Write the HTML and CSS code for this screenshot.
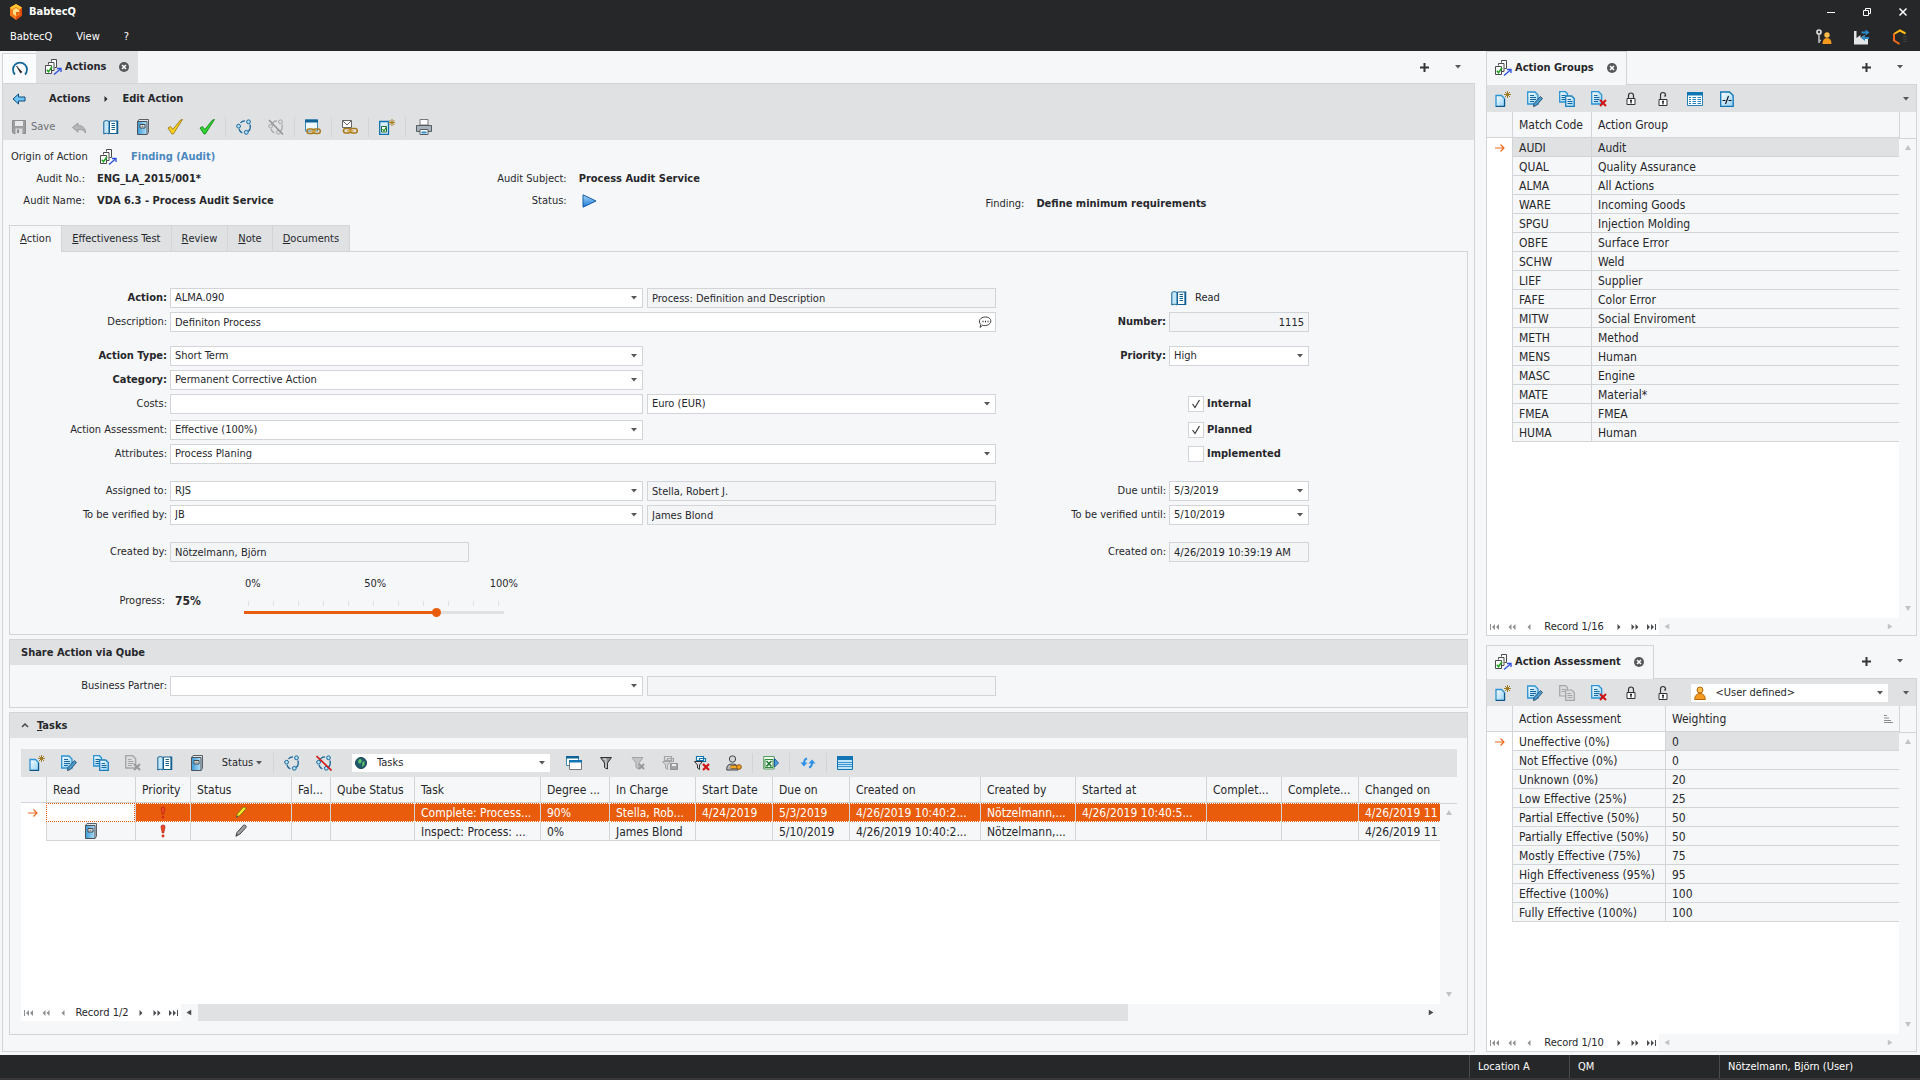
FILE: index.html
```
<!DOCTYPE html>
<html lang="en">
<head>
<meta charset="utf-8">
<title>BabtecQ</title>
<link rel="stylesheet" href="styles.css">
</head>
<body>
<svg class="sprite" aria-hidden="true">
  <defs>
    <linearGradient id="g-blue" x1="0" y1="0" x2="1" y2="1"><stop offset="0" stop-color="#fff"/><stop offset="1" stop-color="#8fd0f5"/></linearGradient>
    <linearGradient id="g-play" x1="0" y1="0" x2="0" y2="1"><stop offset="0" stop-color="#a8d6f8"/><stop offset="1" stop-color="#1878d8"/></linearGradient>
    <linearGradient id="g-book" x1="0" y1="0" x2="1" y2="0"><stop offset="0" stop-color="#3a9bd8"/><stop offset="1" stop-color="#b5e0f8"/></linearGradient>
  </defs>
  <symbol id="i-logo" viewBox="0 0 16 16"><path d="M8 0l6 3.500v8L8 16l-6-4.500v-8z" fill="#f47a1c"/><path d="M8 0l6 3.500-2 2L8 3 4 5.500l-2-2z" fill="#ffc52e"/><path d="M14 3.500v8L8 16v-3l4-2.500v-5z" fill="#e0480e"/><path d="M8 4l3 2v4l-3 2-3-2V6z" fill="#ffe08a"/><path d="M8 8h3v2l-3 2z" fill="#e8620f"/></symbol>
  <symbol id="i-gauge" viewBox="0 0 16 16"><path d="M3 13.500A7 7 0 1 1 13 13.500" fill="none" stroke="#15679b" stroke-width="1.800"/><path d="M4.500 5l5.500 6-1.500 1z" fill="#222" stroke="#222" stroke-width=".6"/></symbol>
  <symbol id="i-actions" viewBox="0 0 17 16"><g fill="#fff" stroke="#4a4a4a"><path d="M6.500 2.500V.5h5v8h-2"/><path d="M3.500 5.500v-2h5.500v8H7"/><path d="M.5 6.500h6v8h-6z"/></g><path d="M1.800 10.800l1.700 2 3.500-5" fill="none" stroke="#1fa51f" stroke-width="1.500"/><path d="M9 15.500l6.500-5.500" stroke="#2d4fe0" stroke-width="1.300"/><path d="M12 9.500h4V13" fill="none" stroke="#2d4fe0" stroke-width="1.300"/></symbol>
  <symbol id="i-close" viewBox="0 0 12 12"><circle cx="6" cy="6" r="5" fill="#55585b"/><path d="M4 4l4 4M8 4l-4 4" stroke="#fff" stroke-width="1.500"/></symbol>
  <symbol id="i-back" viewBox="0 0 14 12"><path d="M1 6l5.500-5v3H13v4H6.500v3z" fill="#6fc4f8" stroke="#0e4c7c"/></symbol>
  <symbol id="i-save" viewBox="0 0 16 16"><path d="M1.500 1.500h13v13h-12l-1-1z" fill="#9c9ea0" stroke="#8a8c8e"/><path d="M4 2h8v5H4z" fill="#e8e9ea"/><path d="M4.500 9.500h7V15h-7z" fill="#dcddde"/><path d="M6 10.500h2V14H6z" fill="#8a8c8e"/></symbol>
  <symbol id="i-undo" viewBox="0 0 16 16"><path d="M1.500 8.500L7 4v2.500c4.500 0 7.500 2.500 7.500 7.500C13 11 11 10.300 7 10.500v2.700z" fill="#b5b7b9" stroke="#999b9d"/></symbol>
  <symbol id="i-book" viewBox="0 0 16 16"><path d="M.8 2.500C2.500 1.200 4.500 1.500 6 2.500V15C4.500 14 2.500 14 .8 15z" fill="#c4e7fa" stroke="#0f5f92"/><path d="M6.500 2h7.500v12.500H6.500z" fill="#fff" stroke="#0f5f92"/><path d="M8.500 4.500h3.500M8.500 6.500h3.500M8.500 8.500h3.500M8.500 10.500h3.500" stroke="#155f90"/><path d="M14.500 1.500v13.500" stroke="#0f5f92" stroke-width="1.500"/></symbol>
  <symbol id="i-note" viewBox="0 0 16 16"><path d="M2.500 2.500l1.500-2h9.500v13l-1.500 2" fill="#dfe6eb" stroke="#5b6168"/><path d="M2.500 2.500h9.500v13H2.500z" fill="url(#g-book)" stroke="#4c5258"/><path d="M5 5.500h5v3.500H5z" fill="#e9f4fb" stroke="#444"/><path d="M6.500 7.300h2" stroke="#444" stroke-width=".8"/></symbol>
  <symbol id="i-check-y" viewBox="0 0 16 16"><path d="M1 9l2.500-1.500 2.300 3L13.500 1 15.500.5 6.300 15H5z" fill="#ffd21f" stroke="#8f6a05" stroke-width=".8"/></symbol>
  <symbol id="i-check-g" viewBox="0 0 16 16"><path d="M1 9l2.500-1.500 2.300 3L13.500 1 15.500.5 6.300 15H5z" fill="#30d530" stroke="#0c7c12" stroke-width=".8"/></symbol>
  <symbol id="i-cycle" viewBox="0 0 16 16"><g fill="none" stroke="#17659a" stroke-width="1.300"><path d="M4.500 4C5.500 2.500 7 1.800 9 1.800M13.800 5.500c1 2.500.5 5-1.500 7M3 10c.5 1.800 1.500 3 3.300 3.800"/></g><g fill="#b5e3fb" stroke="#17659a"><circle cx="2.600" cy="7.200" r="1.900"/><circle cx="12.500" cy="2.800" r="1.900"/><circle cx="10.300" cy="13.300" r="1.900"/></g></symbol>
  <symbol id="i-cycle-dis" viewBox="0 0 16 16"><g fill="none" stroke="#a5a7a9" stroke-width="1.300"><path d="M4.500 4C5.500 2.500 7 1.800 9 1.800M13.800 5.500c1 2.500.5 5-1.500 7M3 10c.5 1.800 1.500 3 3.300 3.800"/></g><g fill="#dcddde" stroke="#a5a7a9"><circle cx="2.600" cy="7.200" r="1.900"/><circle cx="12.500" cy="2.800" r="1.900"/><circle cx="10.300" cy="13.300" r="1.900"/></g><path d="M1 1l14 14.500" stroke="#8e9092" stroke-width="1.400"/></symbol>
  <symbol id="i-cycle-red" viewBox="0 0 16 16"><g fill="none" stroke="#17659a" stroke-width="1.300"><path d="M4.500 4C5.500 2.500 7 1.800 9 1.800M13.800 5.500c1 2.500.5 5-1.500 7M3 10c.5 1.800 1.500 3 3.300 3.800"/></g><g fill="#b5e3fb" stroke="#17659a"><circle cx="2.600" cy="7.200" r="1.900"/><circle cx="12.500" cy="2.800" r="1.900"/><circle cx="10.300" cy="13.300" r="1.900"/></g><path d="M.5 1l15 14.500" stroke="#d01818" stroke-width="1.600"/></symbol>
  <symbol id="i-winlink" viewBox="0 0 16 16"><path d="M.5 1h12v11H.5z" fill="#eef8fe" stroke="#3a88b8"/><path d="M0 .5h13v3H0z" fill="#0f6196"/><g fill="none" stroke="#a8791a" stroke-width="1.500"><rect x="2" y="10" width="7" height="4.500" rx="2.200"/><rect x="8.300" y="10" width="7" height="4.500" rx="2.200"/></g><path d="M5.500 12.300h6" stroke="#d8aa40" stroke-width="1.500"/></symbol>
  <symbol id="i-maillink" viewBox="0 0 16 16"><path d="M.5 1.500h9v7h-9z" fill="#fff" stroke="#666"/><path d="M.5 1.500L5 6l4.500-4.500" fill="none" stroke="#666"/><g fill="none" stroke="#a8791a" stroke-width="1.500"><rect x="1.500" y="9.500" width="7" height="4.500" rx="2.200"/><rect x="8.300" y="9.500" width="7" height="4.500" rx="2.200"/></g><path d="M5 11.800h6.500" stroke="#d8aa40" stroke-width="1.500"/></symbol>
  <symbol id="i-doccheck" viewBox="0 0 16 16"><path d="M.7 2.500h8.800V15.300H.7z" fill="#d6effc" stroke="#0f6fae" stroke-width="1.300"/><path d="M2.500 7.500h5V13h-5z" fill="#fff" stroke="#2a6a3a"/><path d="M3.500 10l1.500 2 2.500-4" fill="none" stroke="#0f8f20" stroke-width="1.200"/><path d="M13 0v7M9.500 3.500h7M10.500 1l5 5M15.500 1l-5 5" stroke="#a67c1a" stroke-width=".9"/></symbol>
  <symbol id="i-print" viewBox="0 0 16 16"><path d="M4 .5h8V6H4z" fill="#fff" stroke="#777"/><path d="M.5 6.500h15v6H.5z" fill="#a9b2ba" stroke="#555c63"/><path d="M4 10.500h8v5H4z" fill="#fff" stroke="#555c63"/><path d="M5.500 13.500h5" stroke="#2e8cc8" stroke-width="2"/></symbol>
  <symbol id="i-new" viewBox="0 0 16 16"><path d="M1 4.500h5.500l3 3V15.300H1z" fill="url(#g-blue)" stroke="#2a93d3" stroke-width="1.300"/><path d="M9.600 8v7.400H1" fill="none" stroke="#0d4f7c"/><path d="M12.500 0v7M9 3.500h7M10 1l5 5M15 1l-5 5" stroke="#9a7114" stroke-width=".9"/></symbol>
  <symbol id="i-edit" viewBox="0 0 16 16"><path d="M.7 1h7.300l3 3V13H.7z" fill="url(#g-blue)" stroke="#2a93d3" stroke-width="1.300"/><path d="M3 4.500h4M3 6.500h6M3 8.500h6M3 10.500h4" stroke="#16679d"/><path d="M6.500 15.500l.5-3L13.500 5.500l2 2L9.300 14.500z" fill="#4a9cd0" stroke="#274c66" stroke-width=".9"/></symbol>
  <symbol id="i-copy" viewBox="0 0 16 16"><path d="M.7.7h5.800l2 2V11H.7z" fill="url(#g-blue)" stroke="#2a93d3" stroke-width="1.300"/><path d="M2.500 4.500h4M2.500 6.500h4M2.500 8.500h4" stroke="#16679d"/><path d="M6.700 5h6l2.600 2.500V15.300H6.700z" fill="url(#g-blue)" stroke="#1d7fbc" stroke-width="1.300"/><path d="M8.500 8.500h3.500M8.500 10.500h5M8.500 12.500h5" stroke="#16679d"/></symbol>
  <symbol id="i-copy-dis" viewBox="0 0 16 16"><g fill="#dcddde" stroke="#a3a5a7" stroke-width="1.200"><path d="M.7.7h5.800l2 2V11H.7z"/><path d="M6.700 5h6l2.600 2.500V15.300H6.700z"/></g><path d="M2.500 4.500h4M2.500 6.500h4M8.500 8.500h3.500M8.500 10.500h5M8.500 12.500h5" stroke="#a3a5a7"/></symbol>
  <symbol id="i-del" viewBox="0 0 16 16"><path d="M.7.7h7l3 3V13H.7z" fill="url(#g-blue)" stroke="#2a93d3" stroke-width="1.300"/><path d="M3 4.500h3.500M3 6.500h5.500M3 8.500h5.500M3 10.500h4" stroke="#16679d"/><path d="M9 9l6 6M15 9l-6 6" stroke="#d11313" stroke-width="2"/></symbol>
  <symbol id="i-del-dis" viewBox="0 0 16 16"><path d="M.7.7h7l3 3V13H.7z" fill="#dcddde" stroke="#a3a5a7" stroke-width="1.300"/><path d="M3 4.500h3.500M3 6.500h5.500M3 8.500h5.500M3 10.500h4" stroke="#a3a5a7"/><path d="M9 9l6 6M15 9l-6 6" stroke="#97999b" stroke-width="2"/></symbol>
  <symbol id="i-lock" viewBox="0 0 16 16"><path d="M5.500 7V4.500a2.500 2.500 0 0 1 5 0V7" fill="none" stroke="#333" stroke-width="1.200"/><path d="M4 7.500h8v6H4z" fill="#fff" stroke="#333"/><path d="M8 9v3.500M7 9.500h2" stroke="#222" stroke-width="1.300"/></symbol>
  <symbol id="i-unlock" viewBox="0 0 16 16"><path d="M5.500 8.500V4a2.500 2.500 0 0 1 5 0v1H9" fill="none" stroke="#333" stroke-width="1.200"/><path d="M4 8.500h8v6H4z" fill="#fff" stroke="#333"/><path d="M8 10v3.500M7 10.500h2" stroke="#222" stroke-width="1.300"/></symbol>
  <symbol id="i-table" viewBox="0 0 16 16"><path d="M.5 1.500h15v13H.5z" fill="#fff" stroke="#2580b8"/><path d="M0 1h16v3.500H0z" fill="#1376b4"/><path d="M2 6.500h2M5.500 6.500H9M10.500 6.500H14M2 8.500h2M5.500 8.500H9M10.500 8.500H14M2 10.500h2M5.500 10.500H9M10.500 10.500H14M2 12.500h2M5.500 12.500H9M10.500 12.500H14" stroke="#2580b8"/></symbol>
  <symbol id="i-script" viewBox="0 0 16 16"><path d="M1.700 1h9l3.500 3.500V15.300H1.700z" fill="url(#g-blue)" stroke="#1376b4" stroke-width="1.300"/><path d="M3.500 9.500h3M9.500 9.500h3M6.500 13l3-8" stroke="#111" stroke-width="1.100"/></symbol>
  <symbol id="i-windows" viewBox="0 0 16 16"><path d="M.5 1.500h12v9H.5z" fill="#fff" stroke="#3a88b8"/><path d="M0 1h13v2.500H0z" fill="#0f6196"/><path d="M3.500 5.500h12v9h-12z" fill="#fff" stroke="#777"/><path d="M3 5h13v2.500H3z" fill="#1376b4"/></symbol>
  <symbol id="i-funnel" viewBox="0 0 16 16"><path d="M2.500 2.500h11L9.500 8v6l-3-1.500V8z" fill="#8c9094" stroke="#333"/><path d="M5 4h3v9" fill="none" stroke="#e6e8ea"/></symbol>
  <symbol id="i-funnel-dis" viewBox="0 0 16 16"><path d="M2 2.500h11L9 8v6l-3-1.500V8z" fill="#c3c5c7" stroke="#a3a5a7"/><path d="M9 9l5 5M14 9l-5 5" stroke="#97999b" stroke-width="2"/></symbol>
  <symbol id="i-funnel-save" viewBox="0 0 16 16"><path d="M2.500 1.500h7v4h-7zM5.500 3.500h6v3h-6z" fill="#dcddde" stroke="#a3a5a7" stroke-width="1.200"/><path d="M.5 6.500h8L5.500 10v4.500L3.500 13v-3z" fill="#cfd1d3" stroke="#a3a5a7"/><path d="M8.500 8.500h7v6h-7z" fill="#a3a5a7" stroke="#8e9092"/><path d="M10 9h4v2h-4z" fill="#eee"/></symbol>
  <symbol id="i-funnel-del" viewBox="0 0 16 16"><path d="M2.500 1.500h7v4h-7zM5.500 3.500h6v3h-6z" fill="#fff" stroke="#1376b4" stroke-width="1.200"/><path d="M.5 6.500h8L5.500 10v4.500L3.500 13v-3z" fill="#ddd" stroke="#333"/><path d="M9 9l6 6M15 9l-6 6" stroke="#d11313" stroke-width="2.200"/></symbol>
  <symbol id="i-userkey" viewBox="0 0 16 16"><circle cx="6.500" cy="4" r="3.200" fill="#d3d5d7" stroke="#444"/><path d="M.7 15c0-5 2-6 5.800-6s5.500 1.500 5.500 6z" fill="#b4b8bb" stroke="#444"/><path d="M4.500 12h7" stroke="#8d4f08" stroke-width="3.500"/><path d="M4.500 12h7" stroke="#f5a623" stroke-width="2"/><circle cx="13" cy="12" r="2.300" fill="#f5a623" stroke="#8d4f08"/></symbol>
  <symbol id="i-excel" viewBox="0 0 16 16"><path d="M.7 1.500h10.500V14H.7z" fill="#eef8ee" stroke="#5a9c62"/><path d="M2 4.500h8v8H2z" fill="#fff" stroke="#2f8a3c"/><path d="M3.500 6l5 5.500M8.500 6l-5 5.500" stroke="#1d7a2c" stroke-width="1.600"/><path d="M11.500 3.500L15.500 8l-4 4z" fill="#4aa0e0" stroke="#1d5fa0"/></symbol>
  <symbol id="i-refresh" viewBox="0 0 16 16"><g fill="none" stroke="#2f8fe6" stroke-width="2"><path d="M7 3.500C5 4 4 5.500 4 8.500M9 12.500c2-.5 3-2 3-5"/></g><path d="M.5 7.500h7L4 11.500zM8.500 8.500h7L12 4.500z" fill="#2f8fe6"/></symbol>
  <symbol id="i-list" viewBox="0 0 16 16"><path d="M.5 1.500h15v13H.5z" fill="#bfe3fa" stroke="#1376b4"/><path d="M0 1h16v4H0z" fill="#1376b4"/><path d="M1 7.500h14M1 9.500h14M1 11.500h14" stroke="#3a93cf"/></symbol>
  <symbol id="i-globe" viewBox="0 0 14 14"><circle cx="7" cy="7" r="5.500" fill="#1f5a6a" stroke="#17415a"/><path d="M4.500 3.500L7 3l1 2-2 3-2-2zM8.500 6l2-1v4l-2.500 2z" fill="#5fc06a"/></symbol>
  <symbol id="i-user" viewBox="0 0 14 14"><circle cx="7" cy="4" r="3" fill="#ffbd4a" stroke="#b3660a"/><path d="M1.700 13.500c0-3.500 2-6 5.300-6s5.300 2.500 5.300 6z" fill="#f59a1c" stroke="#b3660a"/></symbol>
  <symbol id="i-keyuser" viewBox="0 0 16 16"><circle cx="3" cy="3" r="2" fill="none" stroke="#ddd" stroke-width="1.700"/><path d="M3 5v9M3 11.500h2" stroke="#bbb" stroke-width="1.600"/><circle cx="11" cy="6" r="2.700" fill="#ffbd4a"/><path d="M6.500 15c0-4 1.500-6 4.500-6s4.500 2 4.500 6z" fill="#f59a1c"/></symbol>
  <symbol id="i-factory" viewBox="0 0 16 16"><path d="M0 2h2.500v7l4-3v3l4-3v3h3.500v6.500H0z" fill="#e3e5e7"/><path d="M7.500 2.500h4V.5l4 3-4 3v-2h-4zM15 8h-4V6L7 9l4 3v-2h4z" fill="#2b8ac6"/></symbol>
  <symbol id="i-hex" viewBox="0 0 16 16"><path d="M2 5l6-3.500L13.500 4.500" fill="none" stroke="#ffb914" stroke-width="2"/><path d="M2 4.500v7l5.500 3.500" fill="none" stroke="#f26a1b" stroke-width="2"/><path d="M11.500 7.500h3M11.500 10h3M11.500 12.500h3" stroke="#55585b" stroke-dasharray="1 1"/></symbol>
  <symbol id="i-play" viewBox="0 0 15 14"><path d="M1 .8L14 7 1 13.200z" fill="url(#g-play)" stroke="#145fa6"/></symbol>
  <symbol id="i-bang" viewBox="0 0 8 14"><path d="M2 3a2 2 0 0 1 4 0L4.700 9H3.300z" fill="#f0462a" stroke="#a8200c" stroke-width=".7"/><circle cx="4" cy="12" r="1.400" fill="#d83018"/></symbol>
  <symbol id="i-pen-y" viewBox="0 0 14 14"><path d="M2 11.500l1-3L9.500 1.200c1-.9 3.500.8 2.500 2.300L5.500 10.500z" fill="#f5e928" stroke="#6f6a10" stroke-width=".9"/><path d="M1.500 13l.8-2.800 1.700 1.500z" fill="#555"/></symbol>
  <symbol id="i-pen-g" viewBox="0 0 14 14"><path d="M2 11.500l1-3L9.500 1.200c1-.9 3.500.8 2.500 2.300L5.500 10.500z" fill="#9c9fa2" stroke="#44474a"/><path d="M1.500 13l.8-2.800 1.700 1.500z" fill="#444"/></symbol>
  <symbol id="i-arrow" viewBox="0 0 10 8"><path d="M0 4h9M5.500 .5L9 4 5.500 7.500" fill="none" stroke="#ec6b1f" stroke-width="1.200"/></symbol>
  <symbol id="i-bubble" viewBox="0 0 14 13"><path d="M2 12l.8-3C-.2 6 2 1.500 7.300 1.500s7.500 4.500 3.500 7.500C9 10.300 6 10.200 4.500 9.800z" fill="#fff" stroke="#444"/><path d="M4.500 6h1M7 6h1M9.500 6h1" stroke="#222" stroke-width="1.300"/></symbol>
  <symbol id="i-plus" viewBox="0 0 9 9"><path d="M4.500 0v9M0 4.500h9" stroke="#333639" stroke-width="2"/></symbol>
  <symbol id="i-down" viewBox="0 0 6 4"><path d="M0 0h6L3 3.500z" fill="currentColor"/></symbol>
  <symbol id="i-up" viewBox="0 0 6 5"><path d="M0 5h6L3 0z" fill="currentColor"/></symbol>
  <symbol id="i-first" viewBox="0 0 10 6"><path d="M.5 0v6" stroke="currentColor"/><path d="M5 0v6L2 3zM9 0v6L6 3z" fill="currentColor"/></symbol>
  <symbol id="i-pgprev" viewBox="0 0 8 6"><path d="M3.500 0v6L.5 3zM7.500 0v6l-3-3z" fill="currentColor"/></symbol>
  <symbol id="i-prev" viewBox="0 0 4 6"><path d="M3.500 0v6L.5 3z" fill="currentColor"/></symbol>
  <symbol id="i-next" viewBox="0 0 4 6"><path d="M.5 0v6l3-3z" fill="currentColor"/></symbol>
  <symbol id="i-pgnext" viewBox="0 0 8 6"><path d="M.5 0v6l3-3zM4.500 0v6l3-3z" fill="currentColor"/></symbol>
  <symbol id="i-last" viewBox="0 0 10 6"><path d="M9.500 0v6" stroke="currentColor"/><path d="M1 0v6l3-3zM5 0v6l3-3z" fill="currentColor"/></symbol>
  <symbol id="i-sort" viewBox="0 0 9 8"><path d="M0 .5h3M0 3h5M0 5.500h7M0 7.500h9" stroke="#8b8e91"/></symbol>
  <symbol id="i-min" viewBox="0 0 10 10"><path d="M1 5.500h8" stroke="#fff"/></symbol>
  <symbol id="i-restore" viewBox="0 0 10 10"><path d="M1.500 3.500h5v5h-5zM3.500 3V1.500h5v5H7" fill="none" stroke="#fff"/></symbol>
  <symbol id="i-x" viewBox="0 0 10 10"><path d="M1.500 1.500l7 7M8.500 1.500l-7 7" stroke="#fff" stroke-width="1.500"/></symbol>
</svg>

<div class="app">
  <header class="top">
    <div class="title-bar">
      <svg class="ic16"><use href="#i-logo"/></svg>
      <strong>BabtecQ</strong>
      <div class="window-buttons">
        <button aria-label="Minimize"><svg class="ic10"><use href="#i-min"/></svg></button>
        <button aria-label="Restore"><svg class="ic10"><use href="#i-restore"/></svg></button>
        <button aria-label="Close"><svg class="ic10"><use href="#i-x"/></svg></button>
      </div>
    </div>
    <nav class="menu-bar">
      <button>BabtecQ</button><button>View</button><button>?</button>
      <div class="menu-tools">
        <button aria-label="User rights"><svg class="ic16"><use href="#i-keyuser"/></svg></button>
        <button aria-label="Change location"><svg class="ic16"><use href="#i-factory"/></svg></button>
        <button aria-label="Qube"><svg class="ic16"><use href="#i-hex"/></svg></button>
      </div>
    </nav>
  </header>

  <div class="workspace">
    <main class="main-col">
      <div class="doc-tabs">
        <button class="doc-tab home" aria-label="Dashboard"><svg class="ic16"><use href="#i-gauge"/></svg></button>
        <div class="doc-tab shaded"><svg class="ic17"><use href="#i-actions"/></svg><strong>Actions</strong><button class="tab-close" aria-label="Close tab"><svg class="ic12"><use href="#i-close"/></svg></button></div>
        <div class="tab-tools"><button aria-label="Add"><svg class="ic9"><use href="#i-plus"/></svg></button><button aria-label="More"><svg class="ic-down"><use href="#i-down"/></svg></button></div>
      </div>
      <div class="main-body">
        <div class="crumbs">
          <button aria-label="Back"><svg class="ic-back"><use href="#i-back"/></svg></button>
          <strong>Actions</strong><svg class="n4"><use href="#i-next"/></svg><strong>Edit Action</strong>
        </div>
        <div class="toolbar main-tools">
          <button class="save" disabled><svg class="ic16"><use href="#i-save"/></svg>Save</button>
          <button class="tool" aria-label="Undo"><svg class="ic16"><use href="#i-undo"/></svg></button>
          <button class="tool" aria-label="Read"><svg class="ic16"><use href="#i-book"/></svg></button>
          <button class="tool" aria-label="Unread"><svg class="ic16"><use href="#i-note"/></svg></button>
          <button class="tool" aria-label="Complete"><svg class="ic16"><use href="#i-check-y"/></svg></button>
          <button class="tool" aria-label="Verify"><svg class="ic16"><use href="#i-check-g"/></svg></button>
          <span class="sep"></span>
          <button class="tool" aria-label="Workflow"><svg class="ic16"><use href="#i-cycle"/></svg></button>
          <button class="tool" aria-label="Stop workflow"><svg class="ic16"><use href="#i-cycle-dis"/></svg></button>
          <span class="sep"></span>
          <button class="tool" aria-label="Link"><svg class="ic16"><use href="#i-winlink"/></svg></button>
          <span class="sep"></span>
          <button class="tool" aria-label="Mail link"><svg class="ic16"><use href="#i-maillink"/></svg></button>
          <span class="sep"></span>
          <button class="tool" aria-label="New action"><svg class="ic16"><use href="#i-doccheck"/></svg></button>
          <span class="sep"></span>
          <button class="tool" aria-label="Print"><svg class="ic16"><use href="#i-print"/></svg></button>
        </div>

        <div class="summary">
          <span class="origin">Origin of Action</span>
          <span class="origin-value"><svg class="ic17"><use href="#i-actions"/></svg><a href="#finding">Finding (Audit)</a></span>
          <span class="key">Audit No.:</span><strong>ENG_LA_2015/001*</strong>
          <span class="key">Audit Subject:</span><strong>Process Audit Service</strong>
          <span class="key"></span><span></span>
          <span class="key">Audit Name:</span><strong>VDA 6.3 - Process Audit Service</strong>
          <span class="key">Status:</span><span class="status"><svg class="ic-play"><use href="#i-play"/></svg></span>
          <span class="key low">Finding:</span><strong class="low">Define minimum requirements</strong>
        </div>

        <div class="page-tabs" role="tablist">
          <button class="page-tab active" role="tab"><u>A</u>ction</button>
          <button class="page-tab" role="tab"><u>E</u>ffectiveness Test</button>
          <button class="page-tab" role="tab"><u>R</u>eview</button>
          <button class="page-tab" role="tab"><u>N</u>ote</button>
          <button class="page-tab" role="tab"><u>D</u>ocuments</button>
        </div>
        <form class="panel form">
          <div class="group">
            <div class="row">
              <label class="req" for="action">Action:</label>
              <select id="action"><option>ALMA.090</option></select>
              <input class="second" aria-label="Action name" readonly value="Process: Definition and Description">
              <span class="read"><svg class="ic16"><use href="#i-book"/></svg>Read</span>
            </div>
            <div class="row">
              <label for="desc">Description:</label>
              <div class="wide with-icon"><input id="desc" value="Definiton Process"><svg class="ic14"><use href="#i-bubble"/></svg></div>
              <label class="req" for="number">Number:</label>
              <input id="number" class="num" readonly value="1115">
            </div>
          </div>
          <div class="group">
            <div class="row">
              <label class="req" for="type">Action Type:</label>
              <select id="type"><option>Short Term</option></select>
              <label class="req" for="prio">Priority:</label>
              <select id="prio"><option>High</option></select>
            </div>
            <div class="row">
              <label class="req" for="cat">Category:</label>
              <select id="cat"><option>Permanent Corrective Action</option></select>
            </div>
            <div class="row">
              <label for="costs">Costs:</label>
              <input id="costs">
              <select class="second" aria-label="Currency"><option>Euro (EUR)</option></select>
              <span class="check"><input type="checkbox" id="internal" checked><label class="req" for="internal">Internal</label></span>
            </div>
          </div>
          <div class="group close">
            <div class="row">
              <label for="assess">Action Assessment:</label>
              <select id="assess"><option>Effective (100%)</option></select>
              <span class="check"><input type="checkbox" id="planned" checked><label class="req" for="planned">Planned</label></span>
            </div>
            <div class="row">
              <label for="attr">Attributes:</label>
              <select id="attr" class="wide"><option>Process Planing</option></select>
              <span class="check"><input type="checkbox" id="impl"><label class="req" for="impl">Implemented</label></span>
            </div>
          </div>
          <div class="group">
            <div class="row">
              <label for="assigned">Assigned to:</label>
              <select id="assigned"><option>RJS</option></select>
              <input class="second" aria-label="Assignee name" readonly value="Stella, Robert J.">
              <label for="due">Due until:</label>
              <select id="due"><option>5/3/2019</option></select>
            </div>
            <div class="row">
              <label for="verify">To be verified by:</label>
              <select id="verify"><option>JB</option></select>
              <input class="second" aria-label="Verifier name" readonly value="James Blond">
              <label for="until">To be verified until:</label>
              <select id="until"><option>5/10/2019</option></select>
            </div>
          </div>
          <div class="group">
            <div class="row">
              <label for="creator">Created by:</label>
              <input id="creator" class="short" readonly value="Nötzelmann, Björn">
              <label for="created">Created on:</label>
              <input id="created" readonly value="4/26/2019 10:39:19 AM">
            </div>
          </div>
          <div class="progress">
            <label for="progress">Progress:</label>
            <strong>75%</strong>
            <div class="scale">
              <div class="scale-labels"><span>0%</span><span>50%</span><span>100%</span></div>
              <div class="ticks"></div>
              <input type="range" id="progress" min="0" max="100" value="75">
            </div>
          </div>
        </form>

        <section class="panel">
          <h2>Share Action via Qube</h2>
          <div class="share row">
            <label for="partner">Business Partner:</label>
            <select id="partner"><option></option></select>
            <input class="second" aria-label="Business partner name" readonly>
          </div>
        </section>

        <section class="panel tasks">
          <h2><svg class="ic-up2"><path d="M1 5l3-3 3 3" fill="none" stroke="#444" stroke-width="1.500"/></svg><span><u>T</u>asks</span></h2>
          <div class="tasks-body">
            <div class="toolbar">
              <button class="tool" aria-label="New"><svg class="ic16"><use href="#i-new"/></svg></button>
              <button class="tool" aria-label="Edit"><svg class="ic16"><use href="#i-edit"/></svg></button>
              <button class="tool" aria-label="Copy"><svg class="ic16"><use href="#i-copy"/></svg></button>
              <button class="tool" aria-label="Delete"><svg class="ic16"><use href="#i-del-dis"/></svg></button>
              <button class="tool" aria-label="Read"><svg class="ic16"><use href="#i-book"/></svg></button>
              <button class="tool" aria-label="Unread"><svg class="ic16"><use href="#i-note"/></svg></button>
              <button class="status-menu">Status<svg class="ic-down"><use href="#i-down"/></svg></button>
              <span class="sep"></span>
              <button class="tool" aria-label="Workflow"><svg class="ic16"><use href="#i-cycle"/></svg></button>
              <button class="tool" aria-label="Stop workflow"><svg class="ic16"><use href="#i-cycle-red"/></svg></button>
              <span class="combo"><svg class="ic14"><use href="#i-globe"/></svg><select aria-label="View"><option>Tasks</option></select></span>
              <button class="tool" aria-label="Views"><svg class="ic16"><use href="#i-windows"/></svg></button>
              <button class="tool" aria-label="Filter"><svg class="ic16"><use href="#i-funnel"/></svg></button>
              <button class="tool" aria-label="Clear filter"><svg class="ic16"><use href="#i-funnel-dis"/></svg></button>
              <button class="tool" aria-label="Save filter"><svg class="ic16"><use href="#i-funnel-save"/></svg></button>
              <button class="tool" aria-label="Delete filter"><svg class="ic16"><use href="#i-funnel-del"/></svg></button>
              <button class="tool" aria-label="User settings"><svg class="ic16"><use href="#i-userkey"/></svg></button>
              <span class="sep"></span>
              <button class="tool" aria-label="Export"><svg class="ic16"><use href="#i-excel"/></svg></button>
              <span class="sep"></span>
              <button class="tool" aria-label="Refresh"><svg class="ic16"><use href="#i-refresh"/></svg></button>
              <span class="sep"></span>
              <button class="tool" aria-label="Details"><svg class="ic16"><use href="#i-list"/></svg></button>
            </div>
            <div class="grid-area">
              <div class="grid-scroll">
                <table class="grid task-grid">
                  <colgroup><col class="w25"><col class="w89"><col class="w55"><col class="w101"><col class="w39"><col class="w84"><col class="w126"><col class="w69"><col class="w86"><col class="w77"><col class="w77"><col class="w131"><col class="w95"><col class="w131"><col class="w75"><col class="w77"><col></colgroup>
                  <thead><tr><th></th><th>Read</th><th>Priority</th><th>Status</th><th>Fal...</th><th>Qube Status</th><th>Task</th><th>Degree ...</th><th>In Charge</th><th>Start Date</th><th>Due on</th><th>Created on</th><th>Created by</th><th>Started at</th><th>Complet...</th><th>Complete...</th><th>Changed on</th></tr></thead>
                  <tbody>
                    <tr class="selected"><td class="ind"><svg class="ic-arrow"><use href="#i-arrow"/></svg></td><td class="focus"></td><td class="mid"><svg class="ic-bang"><use href="#i-bang"/></svg></td><td class="mid"><svg class="ic14"><use href="#i-pen-y"/></svg></td><td></td><td></td><td>Complete: Process...</td><td>90%</td><td>Stella, Rob...</td><td>4/24/2019</td><td>5/3/2019</td><td>4/26/2019 10:40:2...</td><td>Nötzelmann,...</td><td>4/26/2019 10:40:5...</td><td></td><td></td><td>4/26/2019 11</td></tr>
                    <tr><td class="ind"></td><td class="mid"><svg class="ic16"><use href="#i-note"/></svg></td><td class="mid"><svg class="ic-bang"><use href="#i-bang"/></svg></td><td class="mid"><svg class="ic14"><use href="#i-pen-g"/></svg></td><td></td><td></td><td>Inspect: Process: ...</td><td>0%</td><td>James Blond</td><td></td><td>5/10/2019</td><td>4/26/2019 10:40:2...</td><td>Nötzelmann,...</td><td></td><td></td><td></td><td>4/26/2019 11</td></tr>
                  </tbody>
                </table>
              </div>
              <div class="vscroll plain"><svg class="ic-tri"><use href="#i-up"/></svg><svg class="ic-tri flip"><use href="#i-up"/></svg></div>
            </div>
            <div class="record-bar">
              <div class="nav">
                <button class="off" aria-label="First"><svg class="n10"><use href="#i-first"/></svg></button><button class="off" aria-label="Previous page"><svg class="n8"><use href="#i-pgprev"/></svg></button><button class="off" aria-label="Previous"><svg class="n4"><use href="#i-prev"/></svg></button>
                <span class="pos">Record 1/2</span>
                <button aria-label="Next"><svg class="n4"><use href="#i-next"/></svg></button><button aria-label="Next page"><svg class="n8"><use href="#i-pgnext"/></svg></button><button aria-label="Last"><svg class="n10"><use href="#i-last"/></svg></button>
              </div>
              <div class="hscroll live"><svg class="ic-tri turn-left"><use href="#i-up"/></svg><div class="track"><div class="thumb"></div></div><svg class="ic-tri turn-right"><use href="#i-up"/></svg></div>
            </div>
          </div>
        </section>
      </div>
    </main>

    <aside class="side-col">
      <section class="dock groups">
        <div class="doc-tabs">
          <div class="doc-tab active"><svg class="ic17"><use href="#i-actions"/></svg><strong>Action Groups</strong><button class="tab-close" aria-label="Close tab"><svg class="ic12"><use href="#i-close"/></svg></button></div>
          <div class="tab-tools"><button aria-label="Add"><svg class="ic9"><use href="#i-plus"/></svg></button><button aria-label="More"><svg class="ic-down"><use href="#i-down"/></svg></button></div>
        </div>
        <div class="dock-body">
          <div class="toolbar">
            <button class="tool" aria-label="New"><svg class="ic16"><use href="#i-new"/></svg></button>
            <button class="tool" aria-label="Edit"><svg class="ic16"><use href="#i-edit"/></svg></button>
            <button class="tool" aria-label="Copy"><svg class="ic16"><use href="#i-copy"/></svg></button>
            <button class="tool" aria-label="Delete"><svg class="ic16"><use href="#i-del"/></svg></button>
            <button class="tool" aria-label="Lock"><svg class="ic16"><use href="#i-lock"/></svg></button>
            <button class="tool" aria-label="Unlock"><svg class="ic16"><use href="#i-unlock"/></svg></button>
            <button class="tool" aria-label="Table"><svg class="ic16"><use href="#i-table"/></svg></button>
            <button class="tool" aria-label="Script"><svg class="ic16"><use href="#i-script"/></svg></button>
            <button class="more" aria-label="More tools"><svg class="ic-down"><use href="#i-down"/></svg></button>
          </div>
          <div class="grid-area">
            <div class="grid-scroll">
              <table class="grid">
                <colgroup><col class="w25"><col class="w79"><col></colgroup>
                <thead><tr><th></th><th>Match Code</th><th>Action Group</th></tr></thead>
                <tbody>
                  <tr class="current"><td class="ind"><svg class="ic-arrow"><use href="#i-arrow"/></svg></td><td>AUDI</td><td>Audit</td></tr>
                  <tr><td class="ind"></td><td>QUAL</td><td>Quality Assurance</td></tr>
                  <tr><td class="ind"></td><td>ALMA</td><td>All Actions</td></tr>
                  <tr><td class="ind"></td><td>WARE</td><td>Incoming Goods</td></tr>
                  <tr><td class="ind"></td><td>SPGU</td><td>Injection Molding</td></tr>
                  <tr><td class="ind"></td><td>OBFE</td><td>Surface Error</td></tr>
                  <tr><td class="ind"></td><td>SCHW</td><td>Weld</td></tr>
                  <tr><td class="ind"></td><td>LIEF</td><td>Supplier</td></tr>
                  <tr><td class="ind"></td><td>FAFE</td><td>Color Error</td></tr>
                  <tr><td class="ind"></td><td>MITW</td><td>Social Enviroment</td></tr>
                  <tr><td class="ind"></td><td>METH</td><td>Method</td></tr>
                  <tr><td class="ind"></td><td>MENS</td><td>Human</td></tr>
                  <tr><td class="ind"></td><td>MASC</td><td>Engine</td></tr>
                  <tr><td class="ind"></td><td>MATE</td><td>Material*</td></tr>
                  <tr><td class="ind"></td><td>FMEA</td><td>FMEA</td></tr>
                  <tr><td class="ind"></td><td>HUMA</td><td>Human</td></tr>
                </tbody>
              </table>
            </div>
            <div class="vscroll"><svg class="ic-tri"><use href="#i-up"/></svg><svg class="ic-tri flip"><use href="#i-up"/></svg></div>
          </div>
          <div class="record-bar">
            <div class="nav roomy">
              <button class="off" aria-label="First"><svg class="n10"><use href="#i-first"/></svg></button><button class="off" aria-label="Previous page"><svg class="n8"><use href="#i-pgprev"/></svg></button><button class="off" aria-label="Previous"><svg class="n4"><use href="#i-prev"/></svg></button>
              <span class="pos">Record 1/16</span>
              <button aria-label="Next"><svg class="n4"><use href="#i-next"/></svg></button><button aria-label="Next page"><svg class="n8"><use href="#i-pgnext"/></svg></button><button aria-label="Last"><svg class="n10"><use href="#i-last"/></svg></button>
            </div>
            <div class="hscroll"><svg class="ic-tri turn-left"><use href="#i-up"/></svg><svg class="ic-tri turn-right"><use href="#i-up"/></svg></div>
          </div>
        </div>
      </section>

      <section class="dock assessment">
        <div class="doc-tabs">
          <div class="doc-tab active"><svg class="ic17"><use href="#i-actions"/></svg><strong>Action Assessment</strong><button class="tab-close" aria-label="Close tab"><svg class="ic12"><use href="#i-close"/></svg></button></div>
          <div class="tab-tools"><button aria-label="Add"><svg class="ic9"><use href="#i-plus"/></svg></button><button aria-label="More"><svg class="ic-down"><use href="#i-down"/></svg></button></div>
        </div>
        <div class="dock-body">
          <div class="toolbar">
            <button class="tool" aria-label="New"><svg class="ic16"><use href="#i-new"/></svg></button>
            <button class="tool" aria-label="Edit"><svg class="ic16"><use href="#i-edit"/></svg></button>
            <button class="tool" aria-label="Copy"><svg class="ic16"><use href="#i-copy-dis"/></svg></button>
            <button class="tool" aria-label="Delete"><svg class="ic16"><use href="#i-del"/></svg></button>
            <button class="tool" aria-label="Lock"><svg class="ic16"><use href="#i-lock"/></svg></button>
            <button class="tool" aria-label="Unlock"><svg class="ic16"><use href="#i-unlock"/></svg></button>
            <span class="combo"><svg class="ic14"><use href="#i-user"/></svg><select aria-label="View"><option>&lt;User defined&gt;</option></select></span>
            <button class="more" aria-label="More tools"><svg class="ic-down"><use href="#i-down"/></svg></button>
          </div>
          <div class="grid-area">
            <div class="grid-scroll">
              <table class="grid">
                <colgroup><col class="w25"><col class="w153"><col></colgroup>
                <thead><tr><th></th><th>Action Assessment</th><th><span class="sorted">Weighting<svg class="ic-sort"><use href="#i-sort"/></svg></span></th></tr></thead>
                <tbody>
                  <tr class="current"><td class="ind"><svg class="ic-arrow"><use href="#i-arrow"/></svg></td><td class="focus">Uneffective (0%)</td><td>0</td></tr>
                  <tr><td class="ind"></td><td>Not Effective (0%)</td><td>0</td></tr>
                  <tr><td class="ind"></td><td>Unknown (0%)</td><td>20</td></tr>
                  <tr><td class="ind"></td><td>Low Effective (25%)</td><td>25</td></tr>
                  <tr><td class="ind"></td><td>Partial Effective (50%)</td><td>50</td></tr>
                  <tr><td class="ind"></td><td>Partially Effective (50%)</td><td>50</td></tr>
                  <tr><td class="ind"></td><td>Mostly Effective (75%)</td><td>75</td></tr>
                  <tr><td class="ind"></td><td>High Effectiveness (95%)</td><td>95</td></tr>
                  <tr><td class="ind"></td><td>Effective (100%)</td><td>100</td></tr>
                  <tr><td class="ind"></td><td>Fully Effective (100%)</td><td>100</td></tr>
                </tbody>
              </table>
            </div>
            <div class="vscroll"><svg class="ic-tri"><use href="#i-up"/></svg><svg class="ic-tri flip"><use href="#i-up"/></svg></div>
          </div>
          <div class="record-bar">
            <div class="nav roomy">
              <button class="off" aria-label="First"><svg class="n10"><use href="#i-first"/></svg></button><button class="off" aria-label="Previous page"><svg class="n8"><use href="#i-pgprev"/></svg></button><button class="off" aria-label="Previous"><svg class="n4"><use href="#i-prev"/></svg></button>
              <span class="pos">Record 1/10</span>
              <button aria-label="Next"><svg class="n4"><use href="#i-next"/></svg></button><button aria-label="Next page"><svg class="n8"><use href="#i-pgnext"/></svg></button><button aria-label="Last"><svg class="n10"><use href="#i-last"/></svg></button>
            </div>
            <div class="hscroll"><svg class="ic-tri turn-left"><use href="#i-up"/></svg><svg class="ic-tri turn-right"><use href="#i-up"/></svg></div>
          </div>
        </div>
      </section>
    </aside>
  </div>

  <footer class="status-bar"><span class="loc">Location A</span><span class="dept">QM</span><span class="who">Nötzelmann, Björn (User)</span></footer>
</div>
</body>
</html>
```
FILE: styles.css
```
:root {
  --bg: #f6f7f9;
  --bar: #dfe1e3;
  --line: #d2d4d7;
  --dark: #262729;
  --text: #26272b;
  --orange: #e85c0c;
  --caret: url("data:image/svg+xml,%3Csvg xmlns='http://www.w3.org/2000/svg' width='6' height='4'%3E%3Cpath d='M0 0h6L3 3.500z' fill='%2355585b'/%3E%3C/svg%3E");
  --tick: url("data:image/svg+xml,%3Csvg xmlns='http://www.w3.org/2000/svg' width='10' height='10'%3E%3Cpath d='M1.500 5l2.500 3.500L8.500 1' fill='none' stroke='%2333363a' stroke-width='1.200'/%3E%3C/svg%3E");
}

* { box-sizing: border-box; }

body {
  margin: 0;
  background: var(--bg);
  color: var(--text);
  font: 11px/16px "DejaVu Sans Condensed", "DejaVu Sans", "Noto Sans", sans-serif;
}

button, input, select { font: inherit; color: inherit; }
button { padding: 0; border: 0; background: none; display: inline-flex; align-items: center; justify-content: center; }
svg { display: block; flex: none; }

.sprite { position: absolute; width: 0; height: 0; }
.ic9 { width: 9px; height: 9px; }
.ic10 { width: 10px; height: 10px; }
.ic12 { width: 12px; height: 12px; }
.ic14 { width: 14px; height: 14px; }
.ic16 { width: 16px; height: 16px; }
.ic17 { width: 17px; height: 16px; }
.ic-back { width: 14px; height: 12px; }
.ic-play { width: 15px; height: 14px; }
.ic-bang { width: 8px; height: 14px; }
.ic-arrow { width: 10px; height: 8px; }
.ic-sort { width: 9px; height: 8px; }
.ic-down { width: 6px; height: 4px; color: #55585b; }
.ic-up2 { width: 8px; height: 7px; }
.ic-tri { width: 6px; height: 5px; color: #c0c2c5; }
.n4 { width: 4px; height: 6px; }
.n8 { width: 8px; height: 6px; }
.n10 { width: 10px; height: 6px; }
.flip { transform: rotate(180deg); }
.turn-left { transform: rotate(-90deg); }
.turn-right { transform: rotate(90deg); }

.app { min-height: 100vh; display: flex; flex-direction: column; }

/* title and menu */
.top { background: var(--dark); color: #fff; }
.title-bar { height: 23px; padding: 0 8px; display: flex; align-items: center; gap: 5px; }
.window-buttons { margin-left: auto; display: flex; }
.window-buttons button { width: 36px; height: 20px; }
.window-buttons button:last-child { margin-right: -9px; }
.menu-bar { height: 28px; padding: 0 10px; display: flex; align-items: center; gap: 24px; }
.menu-tools { margin-left: auto; display: flex; }
.menu-tools button { width: 38px; }
.menu-tools button:last-child { margin-right: -9px; }

/* workspace */
.workspace { flex: 1; display: grid; grid-template-columns: minmax(0, 1fr) 431px; gap: 11px; padding: 0 3px 3px 2px; }
.main-col, .side-col, .dock { display: flex; flex-direction: column; min-width: 0; }
.doc-tabs { display: flex; align-items: flex-end; height: 32px; }
.doc-tab { height: 32px; padding: 0 8px; display: flex; align-items: center; gap: 3px; }
.doc-tab.home { width: 34px; height: 30px; border: 1px solid var(--line); border-width: 1px 0 0 1px; background: #fafbfc; }
.doc-tab.shaded { padding-left: 9px; background: var(--bar); }
.doc-tab.active { height: 34px; border: 1px solid var(--line); border-bottom: 0; background: var(--bg); z-index: 1; margin-bottom: -1px; padding-bottom: 2px; }
.tab-close { margin-left: 9px; }
.tab-tools { margin-left: auto; align-self: center; display: flex; }
.tab-tools button { width: 34px; }

.main-body { flex: 1; display: flex; flex-direction: column; border: 1px solid var(--line); }
.crumbs { height: 29px; padding: 0 9px; display: flex; align-items: center; gap: 14px; background: var(--bar); }
.crumbs button { margin-right: 9px; }

.toolbar { height: 28px; display: flex; align-items: center; background: var(--bar); }
.toolbar.main-tools { height: 27px; }
.tool { width: 32px; height: 22px; }
.save { width: 60px; gap: 4px; color: #6d7073; justify-content: flex-start; padding-left: 8px; }
.sep { width: 1px; height: 20px; margin: 0 2px; background: #d2d4d6; }
.more { margin-left: auto; width: 20px; }
.combo { margin: 0 8px 0 12px; width: 198px; height: 18px; display: flex; align-items: center; padding-left: 2px; background: #fff; }
.combo select { flex: 1; height: 18px; border: 0; padding-left: 9px; }
.status-menu { width: 58px; gap: 3px; }

.summary {
  padding: 6px 0 13px;
  display: grid;
  grid-template-columns: 82px 358fr 100px 334fr 100px 438fr;
  grid-auto-rows: 22px;
  column-gap: 12px;
  align-items: center;
}
.summary .key { text-align: right; }
.summary .low { padding-top: 5px; }
.origin { padding-left: 8px; white-space: nowrap; }
.origin-value { grid-column: 2 / -1; display: flex; gap: 14px; padding-left: 3px; }
.origin-value a { color: #4a88bf; font-weight: bold; text-decoration: none; }
.status { padding-left: 3px; }

/* page tabs */
.page-tabs { display: flex; margin: 0 6px; height: 26px; align-items: flex-end; }
.page-tab { height: 26px; padding: 0 10px; background: var(--bar); border: 1px solid var(--line); border-width: 1px 1px 0 0; white-space: nowrap; }
.page-tab.active { height: 27px; margin-bottom: -1px; background: var(--bg); border-left-width: 1px; z-index: 1; }

.panel { margin: 0 6px 4px; border: 1px solid var(--line); }
.panel h2 { margin: 0; height: 25px; padding: 0 11px; display: flex; align-items: center; gap: 8px; background: var(--bar); font-size: 11px; }

/* form */
.form { padding: 36px 0 17px; }
.row { display: grid; grid-template-columns: 160px 474fr 352fr 173px 140px 158fr; align-items: center; }
.group { display: flex; flex-direction: column; gap: 4px; margin-bottom: 14px; }
.group:has(+ .close) { margin-bottom: 6px; }
.group.close, .group.close + .group { margin-bottom: 17px; }
.row > label { grid-column: 1; text-align: right; padding-right: 3px; white-space: nowrap; }
.req { font-weight: bold; }
.row > label ~ label { grid-column: 4; }
.row > select, .row > input, .with-icon { grid-column: 2; margin-right: 1px; }
.row > .second { grid-column: 3; margin: 0 0 0 3px; }
.row > .wide { grid-column: 2 / 4; margin-right: 0; }
.row > .short { width: 63%; }
.row > label ~ label + select, .row > label ~ label + input { grid-column: 5; margin: 0; }
input, select { height: 20px; min-width: 0; padding: 0 4px; border: 1px solid var(--line); border-radius: 0; background-color: #fff; outline: 0; }
input[readonly] { background-color: #f4f5f7; }
select { appearance: none; background-image: var(--caret); background-repeat: no-repeat; background-position: right 5px center; }
.num { text-align: right; }
.with-icon { display: flex; align-items: center; padding-right: 3px; border: 1px solid var(--line); background: #fff; }
.with-icon input { flex: 1; height: 18px; border: 0; }
.read { grid-column: 5; display: flex; align-items: center; gap: 8px; padding-left: 2px; }
.check { grid-column: 5 / 7; display: flex; align-items: center; gap: 3px; padding-left: 19px; }
.check input { appearance: none; width: 16px; height: 16px; margin: 0; padding: 0; }
.check input:checked { background: #fff var(--tick) center no-repeat; }

.progress { display: flex; align-items: center; }
.progress label { width: 160px; padding: 8px 5px 0 0; text-align: right; }
.progress strong { width: 74px; padding: 8px 0 0 5px; font-size: 12px; }
.scale { width: 274px; }
.scale-labels { display: flex; justify-content: space-between; padding-left: 1px; }
.ticks { width: 253px; height: 5px; margin: 9px 0 2px 4px; background: repeating-linear-gradient(90deg, var(--bar) 0 1px, transparent 1px 25px); }
.scale input { appearance: none; display: block; width: 260px; height: 9px; margin: 0; padding: 0; border: 0; background: linear-gradient(90deg, var(--orange) 75%, var(--bar) 75%) center / 100% 3px no-repeat; }
.scale input::-webkit-slider-thumb { appearance: none; width: 9px; height: 9px; border-radius: 50%; background: var(--orange); }

.share { padding: 11px 0; }

/* grids */
.tasks { flex: 1; margin-bottom: 16px; display: flex; flex-direction: column; }
.tasks-body { flex: 1; display: flex; flex-direction: column; padding: 11px 10px 13px 11px; }
.grid-area { flex: 1; display: flex; background: #fff; }
.grid-scroll { flex: 1; min-width: 0; overflow: hidden; }
.grid { width: 100%; table-layout: fixed; border-spacing: 0; font-size: 12px; }
.grid th, .grid td { padding: 0 0 0 6px; text-align: left; font-weight: normal; white-space: nowrap; overflow: hidden; background: var(--bg); border-left: 1px solid var(--line); border-bottom: 1px solid var(--line); }
.grid th { height: 26px; }
.grid td { height: 19px; padding-top: 1px; line-height: 16px; }
.grid th:first-child, .grid td:first-child { border-left: 0; }
.grid td.ind { background: #fff; border-bottom: 0; padding-left: 8px; }
.task-grid td.ind { padding-left: 7px; }
.grid td.mid { padding: 0; }
.mid svg { margin: 0 auto; }
.current td { background: var(--bar); }
.current td.focus { background: #fff; }
.selected td:not(.ind) { background: var(--orange); color: #fff; border-top: 1px dotted #fff; border-bottom: 1px dotted #fff; }
.selected td.focus:not(.ind) { background: #fff; border: 1px dotted var(--orange); }
.selected .ic-bang, .selected .ic14 { height: 13px; }
.sorted { display: flex; justify-content: space-between; align-items: center; padding-right: 6px; }
.w25 { width: 25px; } .w39 { width: 39px; } .w55 { width: 55px; } .w69 { width: 69px; }
.w75 { width: 75px; } .w77 { width: 77px; } .w79 { width: 79px; } .w84 { width: 84px; }
.w86 { width: 86px; } .w89 { width: 89px; } .w95 { width: 95px; } .w101 { width: 101px; }
.w126 { width: 126px; } .w131 { width: 131px; } .w153 { width: 153px; }

.vscroll { width: 17px; display: flex; flex-direction: column; align-items: center; justify-content: space-between; padding-bottom: 7px; background: var(--bg); }
.vscroll::before { content: ""; align-self: stretch; height: 26px; border: 1px solid var(--line); border-width: 0 0 1px 1px; }
.vscroll.plain::before { border-left: 0; }
.vscroll .flip { margin-top: auto; }
.vscroll .ic-tri:first-child { margin-top: 6px; }

.record-bar { height: 17px; display: flex; background: var(--bg); }
.nav { display: flex; align-items: center; background: #fff; color: #4a4d50; }
.nav button { width: 16px; height: 17px; }
.nav .off { width: 17px; color: #8d9093; }
.nav .off:first-child { width: 16px; }
.pos { width: 62px; text-align: center; color: var(--text); white-space: nowrap; }
.roomy .pos { width: 74px; }
.hscroll { flex: 1; display: flex; align-items: center; justify-content: space-between; padding: 0 6px 0 5px; }
.dock .hscroll { padding-right: 23px; }
.hscroll.live { padding-right: 23px; }
.hscroll.live .ic-tri { color: #4a4d50; }
.track { flex: 1; height: 17px; margin: 0 6px; }
.thumb { width: 76%; height: 17px; background: var(--bar); }

/* side docks */
.dock-body { flex: 1; display: flex; flex-direction: column; border: 1px solid var(--line); }
.groups { height: 585px; margin-bottom: 9px; }
.assessment { flex: 1; }
.dock .doc-tabs { height: 33px; padding-top: 0; }
.dock .tab-tools { padding-bottom: 1px; }
.dock .toolbar { height: 27px; }
.dock .more { color: #888b8e; }

/* status bar */
.status-bar { height: 25px; display: flex; justify-content: flex-end; background: var(--dark); border-bottom: 2px solid #38363a; color: #fff; }
.status-bar span { padding: 4px 8px; border-left: 1px solid #4a4b4e; }
.loc { width: 100px; }
.dept { width: 150px; }
.who { width: 201px; }
```
